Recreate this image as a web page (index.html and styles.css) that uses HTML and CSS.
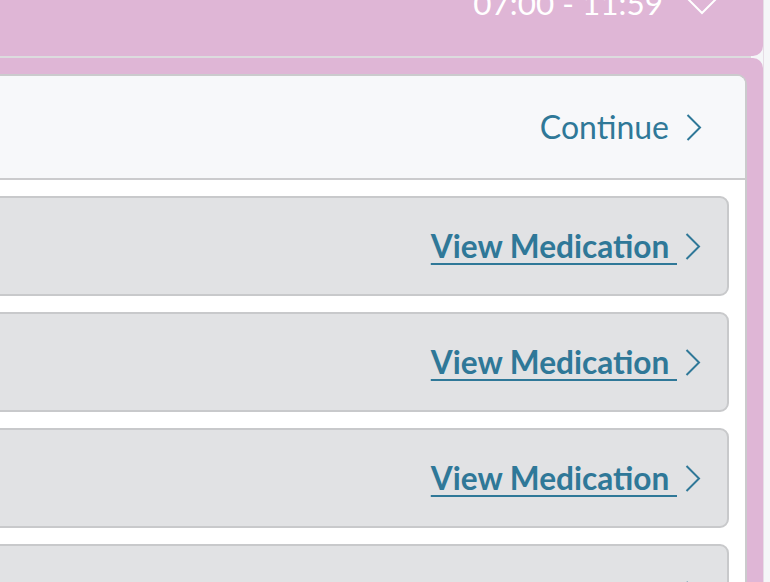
FILE: index.html
```html
<!DOCTYPE html>
<html>
<head>
<meta charset="utf-8">
<link rel="stylesheet" href="styles.css">
</head>
<body>
<div class="shell">
  <div class="topbar">
    <span class="time">07:00 - 11:59</span>
    <svg class="chev-down" width="32" height="18" viewBox="0 0 32 18"><path d="M1 0 L16 15 L31 0" fill="none" stroke="#fff" stroke-width="2"/></svg>
  </div>
  <div class="sep"></div>
  <div class="panel">
    <div class="card">
      <div class="card-head">
        <a class="continue">Continue</a>
        <svg class="chev" width="16" height="27" viewBox="0 0 16 27"><path d="M1.5 1 L14 13.5 L1.5 26" fill="none" stroke="#2f7898" stroke-width="2"/></svg>
      </div>
      <div class="card-body">
        <div class="row"><a class="view">View Medication </a><svg class="chev" width="16" height="27" viewBox="0 0 16 27"><path d="M1.5 1 L14 13.5 L1.5 26" fill="none" stroke="#2f7898" stroke-width="2"/></svg></div>
        <div class="row"><a class="view">View Medication </a><svg class="chev" width="16" height="27" viewBox="0 0 16 27"><path d="M1.5 1 L14 13.5 L1.5 26" fill="none" stroke="#2f7898" stroke-width="2"/></svg></div>
        <div class="row"><a class="view">View Medication </a><svg class="chev" width="16" height="27" viewBox="0 0 16 27"><path d="M1.5 1 L14 13.5 L1.5 26" fill="none" stroke="#2f7898" stroke-width="2"/></svg></div>
        <div class="row"><a class="view">View Medication </a><svg class="chev" width="16" height="27" viewBox="0 0 16 27"><path d="M1.5 1 L14 13.5 L1.5 26" fill="none" stroke="#2f7898" stroke-width="2"/></svg></div>
      </div>
    </div>
  </div>
</div>
</body>
</html>
```

FILE: styles.css
```css
html, body {
  margin: 0;
  padding: 0;
  height: 100%;
  overflow: hidden;
}
body {
  background: #f5f6f8;
  font-family: Lato, "Open Sans", sans-serif;
}
.shell {
  margin-left: -40px;
  width: 803px;
  border-right: 1px solid #e6dde6;
  height: 100%;
  display: flex;
  flex-direction: column;
}
.topbar {
  height: 56px;
  flex: none;
  background: #dfb6d6;
  border-bottom-right-radius: 10px;
  display: flex;
  justify-content: flex-end;
  align-items: flex-start;
  gap: 23px;
  padding-right: 45px;
  overflow: hidden;
}
.time {
  color: #fff;
  font-size: 31.5px;
  line-height: 38px;
  margin-top: -16px;
}
.chev-down {
  margin-top: -2px;
}
.sep {
  height: 2px;
  flex: none;
  background: #dcdcde;
  margin-right: 12px;
}
.panel {
  flex: 1;
  background: #dfb6d6;
  border-top-right-radius: 10px;
  padding: 16px 16px 0 0;
}
.card {
  background: #fff;
  border: 2px solid #cbcbcd;
  border-bottom: none;
  border-top-right-radius: 10px;
  height: 100%;
  overflow: hidden;
}
.card-head {
  height: 102px;
  background: #f7f8fa;
  border-bottom: 2px solid #cbcbcd;
  display: flex;
  justify-content: flex-end;
  align-items: center;
  gap: 17px;
  padding-right: 43px;
}
.continue {
  color: #2f7898;
  font-size: 32px;
  line-height: 38px;
  margin-top: -1px;
}
.card-body {
  padding: 16px 16px 0 0;
  display: flex;
  flex-direction: column;
  gap: 16px;
}
.row {
  height: 96px;
  flex: none;
  background: #e1e2e4;
  border: 2px solid #c8c9cb;
  border-radius: 9px;
  display: flex;
  justify-content: flex-end;
  align-items: center;
  gap: 8px;
  padding-right: 26px;
}
.view {
  color: #2f7898;
  font-size: 31.6px;
  font-weight: 700;
  line-height: 38px;
  text-decoration: underline;
  text-decoration-thickness: 2px;
  text-underline-offset: 5px;
  white-space: pre;
  margin-top: -1px;
}
.chev {
  flex: none;
}
```
